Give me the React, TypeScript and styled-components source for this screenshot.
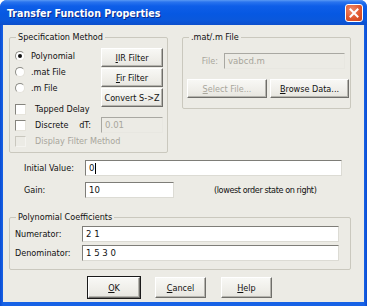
import React from 'react';
import styled, { createGlobalStyle } from 'styled-components';

const Global = createGlobalStyle`
  html, body { margin: 0; padding: 0; background: #ffffff; }
  body { width: 367px; height: 306px; overflow: hidden; }
  * { box-sizing: border-box; }
`;

const FACE = '#ECEBE5';
const DIS = '#A8A69C';

const Window = styled.div`
  width: 367px;
  height: 306px;
  display: flex;
  flex-direction: column;
  background: linear-gradient(to right, #0B4CD2, #1762E6 3px, #1762E6 364px, #0B4CD2);
  border-radius: 7px 7px 0 0;
  overflow: hidden;
  font-family: "DejaVu Sans Condensed", "DejaVu Sans", sans-serif;
  font-size: 9px;
  color: #111;
`;

const TitleBar = styled.div`
  height: 25px;
  flex: none;
  display: flex;
  align-items: center;
  justify-content: space-between;
  padding: 0 4px 0 7px;
  background: linear-gradient(
    to bottom,
    #5A9AF4 0px,
    #2A74EE 2px,
    #0E5EE8 6px,
    #0658E2 14px,
    #0A58DC 20px,
    #0D4FCC 25px
  );
`;

const Title = styled.div`
  font-family: "Liberation Sans Narrow", "DejaVu Sans Condensed", sans-serif;
  font-weight: bold;
  font-size: 10.6px;
  color: #ffffff;
  text-shadow: 1px 1px 0 #0A2A8A;
  padding-top: 1px;
`;

const CloseBtn = styled.div`
  width: 18px;
  height: 18px;
  border: 1px solid #ffffff;
  border-radius: 3px;
  background: radial-gradient(circle at 35% 30%, #F08B6B, #E0582F 55%, #C8421D);
  display: flex;
  align-items: center;
  justify-content: center;
  margin-top: 1px;
`;

const Client = styled.div`
  flex: 1;
  margin: 0 3px 4px 3px;
  background: ${FACE};
  padding: 7px 0 0 6px;
  display: flex;
  flex-direction: column;
`;

const TopRow = styled.div`
  display: flex;
  gap: 14px;
`;

const Group = styled.fieldset<{ $w: number; $h: number }>`
  margin: 0;
  padding: 0;
  width: ${(p) => p.$w}px;
  height: ${(p) => p.$h}px;
  border: 1px solid #CAC8BE;
  border-radius: 2px;
  min-width: 0;
`;

const Legend = styled.legend`
  margin-left: 6px;
  padding: 0 2px;
  line-height: 11px;
  height: 11px;
  font-size: 9px;
`;

const SpecBody = styled.div<{ $top?: number }>`
  display: grid;
  grid-template-columns: 1fr 62px;
  padding: ${(p) => p.$top ?? 5}px 4px 0 5px;
`;

const OptionList = styled.div`
  display: flex;
  flex-direction: column;
`;

const OptionRow = styled.div<{ $gapTop?: number; $disabled?: boolean }>`
  height: 16px;
  display: flex;
  align-items: center;
  gap: 6px;
  margin-top: ${(p) => p.$gapTop ?? 0}px;
  color: ${(p) => (p.$disabled ? DIS : 'inherit')};
`;

const Radio = styled.span<{ $on?: boolean }>`
  width: 10px;
  height: 10px;
  flex: none;
  border-radius: 50%;
  border: 1px solid;
  border-color: #8C8C86 #E4E2DA #E4E2DA #8C8C86;
  background: #ffffff;
  display: flex;
  align-items: center;
  justify-content: center;
  &::after {
    content: '';
    width: 4px;
    height: 4px;
    border-radius: 50%;
    background: ${(p) => (p.$on ? '#111' : 'transparent')};
  }
`;

const Check = styled.span<{ $disabled?: boolean }>`
  width: 11px;
  height: 11px;
  flex: none;
  border: 1px solid;
  border-color: ${(p) => (p.$disabled ? '#C9C7BE #F4F3EF #F4F3EF #C9C7BE' : '#85847E #E6E4DC #E6E4DC #85847E')};
  background: ${(p) => (p.$disabled ? FACE : '#ffffff')};
  margin-right: 3px;
`;

const ButtonStack = styled.div`
  display: flex;
  flex-direction: column;
  gap: 1px;
`;

const Btn = styled.div<{ $w?: number; $h?: number; $disabled?: boolean; $default?: boolean }>`
  width: ${(p) => (p.$w ? `${p.$w}px` : '100%')};
  height: ${(p) => p.$h ?? 19}px;
  display: flex;
  align-items: center;
  justify-content: center;
  background: linear-gradient(to bottom, #F8F8F5, #EFEEE9 60%, #E6E5DF);
  border: 1px solid;
  border-color: #ffffff #6F6E6A #6F6E6A #ffffff;
  box-shadow: ${(p) =>
    p.$default
      ? '0 0 0 1px #1A1A1A, inset -1px -1px 0 #B5B4AE'
      : 'inset -1px -1px 0 #B5B4AE'};
  color: ${(p) => (p.$disabled ? DIS : 'inherit')};
  white-space: nowrap;
  font-size: 9px;
`;

const DiscreteRow = styled.div`
  grid-column: 1 / span 2;
  display: grid;
  grid-template-columns: 1fr 62px;
  height: 16px;
  align-items: center;
`;

const DiscreteLeft = styled.div`
  display: flex;
  align-items: center;
  gap: 6px;
`;

const DtLabel = styled.span`
  margin-left: auto;
  margin-right: 10px;
`;

const Field = styled.div<{ $w?: number; $disabled?: boolean }>`
  width: ${(p) => (p.$w ? `${p.$w}px` : 'auto')};
  flex: ${(p) => (p.$w ? 'none' : '1')};
  height: 16px;
  border: 1px solid;
  border-color: ${(p) => (p.$disabled ? '#A9A8A2 #E8E7E1 #E8E7E1 #A9A8A2' : '#7E7D78 #DCDBD4 #DCDBD4 #7E7D78')};
  background: ${(p) => (p.$disabled ? FACE : '#ffffff')};
  color: ${(p) => (p.$disabled ? DIS : 'inherit')};
  padding: 0 3px;
  line-height: 14px;
  font-size: 9.5px;
  display: flex;
  align-items: center;
  white-space: nowrap;
`;

const Caret = styled.span`
  display: inline-block;
  width: 1px;
  height: 11px;
  background: #000;
  margin-left: 1px;
`;

const FileBody = styled.div`
  display: flex;
  flex-direction: column;
  padding: 10px 0 0 4px;
  gap: 10px;
`;

const FileRow = styled.div`
  display: flex;
  align-items: center;
  justify-content: flex-end;
  gap: 6px;
  padding-right: 5px;
  color: ${DIS};
`;

const FileButtons = styled.div`
  display: flex;
  gap: 3px;
`;

const Fields = styled.div`
  display: flex;
  flex-direction: column;
  gap: 6px;
  padding: 7px 0 0 15px;
`;

const FieldRow = styled.div<{ $labelW: number }>`
  display: flex;
  align-items: center;
  height: 16px;
  & > label {
    width: ${(p) => p.$labelW}px;
    flex: none;
  }
`;

const Note = styled.span`
  margin-left: 40px;
  letter-spacing: -0.4px;
`;

const PolyWrap = styled.div`
  margin-top: 14px;
`;

const PolyBody = styled.div`
  display: flex;
  flex-direction: column;
  gap: 3px;
  padding: 3px 11px 0 5px;
`;

const Footer = styled.div`
  display: flex;
  gap: 15px;
  padding: 7px 0 0 79px;
`;

const U = styled.span`
  text-decoration: underline;
  text-underline-offset: 1px;
`;

export default function App() {
  return (
    <>
      <Global />
      <Window>
        <TitleBar>
          <Title>Transfer Function Properties</Title>
          <CloseBtn>
            <svg width="10" height="10" viewBox="0 0 10 10">
              <path d="M1.5 1.5 L8.5 8.5 M8.5 1.5 L1.5 8.5" stroke="#fff" strokeWidth="2" strokeLinecap="square" />
            </svg>
          </CloseBtn>
        </TitleBar>
        <Client>
          <TopRow>
            <Group $w={159} $h={121}>
              <Legend>Specification Method</Legend>
              <SpecBody>
                <OptionList>
                  <OptionRow>
                    <Radio $on />
                    <span>Polynomial</span>
                  </OptionRow>
                  <OptionRow>
                    <Radio />
                    <span>.mat File</span>
                  </OptionRow>
                  <OptionRow>
                    <Radio />
                    <span>.m File</span>
                  </OptionRow>
                  <OptionRow $gapTop={5}>
                    <Check />
                    <span>Tapped Delay</span>
                  </OptionRow>
                </OptionList>
                <ButtonStack>
                  <Btn>
                    <span><U>I</U>IR Filter</span>
                  </Btn>
                  <Btn>
                    <span><U>F</U>ir Filter</span>
                  </Btn>
                  <Btn>Convert S-&gt;Z</Btn>
                </ButtonStack>
              </SpecBody>
              <SpecBody $top={0}>
                <DiscreteRow>
                  <DiscreteLeft>
                    <Check />
                    <span>Discrete</span>
                    <DtLabel>dT:</DtLabel>
                  </DiscreteLeft>
                  <Field $disabled>0.01</Field>
                </DiscreteRow>
                <OptionRow $disabled style={{ gridColumn: '1 / span 2' }}>
                  <Check $disabled />
                  <span>Display Filter Method</span>
                </OptionRow>
              </SpecBody>
            </Group>
            <Group $w={169} $h={77}>
              <Legend>.mat/.m File</Legend>
              <FileBody>
                <FileRow>
                  <span>File:</span>
                  <Field $w={121} $disabled>vabcd.m</Field>
                </FileRow>
                <FileButtons>
                  <Btn $w={80} $disabled>
                    <span><U>S</U>elect File...</span>
                  </Btn>
                  <Btn $w={79}>
                    <span><U>B</U>rowse Data...</span>
                  </Btn>
                </FileButtons>
              </FileBody>
            </Group>
          </TopRow>
          <Fields>
            <FieldRow $labelW={61}>
              <label>Initial Value:</label>
              <Field $w={257}>
                0<Caret />
              </Field>
            </FieldRow>
            <FieldRow $labelW={61}>
              <label>Gain:</label>
              <Field $w={89}>10</Field>
              <Note>(lowest order state on right)</Note>
            </FieldRow>
          </Fields>
          <PolyWrap>
            <Group $w={342} $h={58}>
              <Legend>Polynomial Coefficients</Legend>
              <PolyBody>
                <FieldRow $labelW={67}>
                  <label>Numerator:</label>
                  <Field>2 1</Field>
                </FieldRow>
                <FieldRow $labelW={67}>
                  <label>Denominator:</label>
                  <Field>1 5 3 0</Field>
                </FieldRow>
              </PolyBody>
            </Group>
          </PolyWrap>
          <Footer>
            <Btn $w={52} $h={21} $default>
              <span><U>O</U>K</span>
            </Btn>
            <Btn $w={51} $h={21}>
              <span><U>C</U>ancel</span>
            </Btn>
            <Btn $w={51} $h={21}>
              <span><U>H</U>elp</span>
            </Btn>
          </Footer>
        </Client>
      </Window>
    </>
  );
}
